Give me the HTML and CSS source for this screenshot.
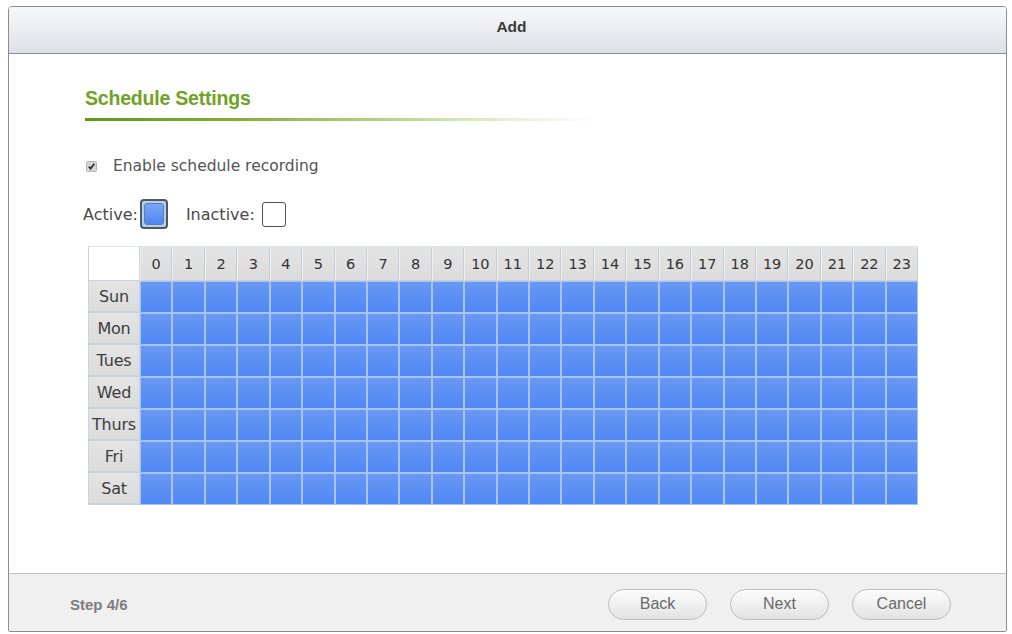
FILE: index.html
```html
<!DOCTYPE html>
<html>
<head>
<meta charset="utf-8">
<title>Add</title>
<link rel="stylesheet" href="styles.css">
</head>
<body>
<div class="dialog">
  <div class="titlebar">Add</div>
  <div class="content">
    <h2 class="section-title">Schedule Settings</h2>
    <div class="section-rule"></div>
    <label class="check-row">
      <svg class="check" width="11" height="11" viewBox="0 0 11 11"><rect x="0.5" y="0.5" width="10" height="10" rx="1" fill="#d6d6d6" stroke="#b5b5b5"/><path d="M2.8 5.6 L4.6 7.6 L8.3 2.8" fill="none" stroke="#333" stroke-width="1.8"/></svg>
      <span>Enable schedule recording</span>
    </label>
    <div class="legend">
      <span class="legend-label">Active:</span>
      <span class="swatch-active"><span class="swatch-fill"></span></span>
      <span class="legend-label inactive-label">Inactive:</span>
      <span class="swatch-inactive"></span>
    </div>
    <div class="schedule">
      <div class="corner"></div>
      <div class="hd">0</div><div class="hd">1</div><div class="hd">2</div><div class="hd">3</div><div class="hd">4</div><div class="hd">5</div><div class="hd">6</div><div class="hd">7</div><div class="hd">8</div><div class="hd">9</div><div class="hd">10</div><div class="hd">11</div><div class="hd">12</div><div class="hd">13</div><div class="hd">14</div><div class="hd">15</div><div class="hd">16</div><div class="hd">17</div><div class="hd">18</div><div class="hd">19</div><div class="hd">20</div><div class="hd">21</div><div class="hd">22</div><div class="hd">23</div>

      <div class="day">Sun</div>
      <span class="c"></span><span class="c"></span><span class="c"></span><span class="c"></span><span class="c"></span><span class="c"></span><span class="c"></span><span class="c"></span><span class="c"></span><span class="c"></span><span class="c"></span><span class="c"></span><span class="c"></span><span class="c"></span><span class="c"></span><span class="c"></span><span class="c"></span><span class="c"></span><span class="c"></span><span class="c"></span><span class="c"></span><span class="c"></span><span class="c"></span><span class="c"></span>

      <div class="day">Mon</div>
      <span class="c"></span><span class="c"></span><span class="c"></span><span class="c"></span><span class="c"></span><span class="c"></span><span class="c"></span><span class="c"></span><span class="c"></span><span class="c"></span><span class="c"></span><span class="c"></span><span class="c"></span><span class="c"></span><span class="c"></span><span class="c"></span><span class="c"></span><span class="c"></span><span class="c"></span><span class="c"></span><span class="c"></span><span class="c"></span><span class="c"></span><span class="c"></span>

      <div class="day">Tues</div>
      <span class="c"></span><span class="c"></span><span class="c"></span><span class="c"></span><span class="c"></span><span class="c"></span><span class="c"></span><span class="c"></span><span class="c"></span><span class="c"></span><span class="c"></span><span class="c"></span><span class="c"></span><span class="c"></span><span class="c"></span><span class="c"></span><span class="c"></span><span class="c"></span><span class="c"></span><span class="c"></span><span class="c"></span><span class="c"></span><span class="c"></span><span class="c"></span>

      <div class="day">Wed</div>
      <span class="c"></span><span class="c"></span><span class="c"></span><span class="c"></span><span class="c"></span><span class="c"></span><span class="c"></span><span class="c"></span><span class="c"></span><span class="c"></span><span class="c"></span><span class="c"></span><span class="c"></span><span class="c"></span><span class="c"></span><span class="c"></span><span class="c"></span><span class="c"></span><span class="c"></span><span class="c"></span><span class="c"></span><span class="c"></span><span class="c"></span><span class="c"></span>

      <div class="day">Thurs</div>
      <span class="c"></span><span class="c"></span><span class="c"></span><span class="c"></span><span class="c"></span><span class="c"></span><span class="c"></span><span class="c"></span><span class="c"></span><span class="c"></span><span class="c"></span><span class="c"></span><span class="c"></span><span class="c"></span><span class="c"></span><span class="c"></span><span class="c"></span><span class="c"></span><span class="c"></span><span class="c"></span><span class="c"></span><span class="c"></span><span class="c"></span><span class="c"></span>

      <div class="day">Fri</div>
      <span class="c"></span><span class="c"></span><span class="c"></span><span class="c"></span><span class="c"></span><span class="c"></span><span class="c"></span><span class="c"></span><span class="c"></span><span class="c"></span><span class="c"></span><span class="c"></span><span class="c"></span><span class="c"></span><span class="c"></span><span class="c"></span><span class="c"></span><span class="c"></span><span class="c"></span><span class="c"></span><span class="c"></span><span class="c"></span><span class="c"></span><span class="c"></span>

      <div class="day">Sat</div>
      <span class="c"></span><span class="c"></span><span class="c"></span><span class="c"></span><span class="c"></span><span class="c"></span><span class="c"></span><span class="c"></span><span class="c"></span><span class="c"></span><span class="c"></span><span class="c"></span><span class="c"></span><span class="c"></span><span class="c"></span><span class="c"></span><span class="c"></span><span class="c"></span><span class="c"></span><span class="c"></span><span class="c"></span><span class="c"></span><span class="c"></span><span class="c"></span>
    </div>
  </div>
  <div class="footer">
    <span class="step">Step 4/6</span>
    <div class="buttons">
      <button class="btn">Back</button>
      <button class="btn">Next</button>
      <button class="btn">Cancel</button>
    </div>
  </div>
</div>
</body>
</html>
```

FILE: styles.css
```css
html, body {
  margin: 0;
  padding: 0;
  background: #ffffff;
}

body {
  width: 1012px;
  height: 634px;
  overflow: hidden;
  font-family: "DejaVu Sans", Verdana, sans-serif;
}

.dialog {
  margin: 6px 0 0 8px;
  width: 999px;
  height: 626px;
  box-sizing: border-box;
  border: 1px solid #8d8d8d;
  border-radius: 4px 4px 2px 2px;
  display: flex;
  flex-direction: column;
  overflow: hidden;
  background: #ffffff;
}

.titlebar {
  height: 47px;
  flex: none;
  box-sizing: border-box;
  border-bottom: 1px solid #8e8e8e;
  background: linear-gradient(#f7f8fa 0%, #eceef1 45%, #dde0e4 100%);
  display: flex;
  align-items: center;
  justify-content: center;
  font-family: "Liberation Sans", Arial, sans-serif;
  font-weight: bold;
  font-size: 15.5px;
  color: #3a3a3a;
  padding: 0 0 7px 8px;
}

.content {
  flex: 1;
  padding: 33px 0 0 76px;
}

.section-title {
  margin: 0;
  font-family: "Liberation Sans", Arial, sans-serif;
  font-weight: bold;
  font-size: 19.5px;
  line-height: 22px;
  color: #6ea323;
  letter-spacing: -0.2px;
}

.section-rule {
  margin-top: 9px;
  width: 512px;
  height: 3px;
  background: linear-gradient(to right, #5d9a17 0%, #7fb238 30%, #b8d68a 60%, rgba(220, 236, 190, 0.6) 85%, rgba(255, 255, 255, 0) 100%);
}

.check-row {
  margin-top: 35px;
  margin-left: 1px;
  height: 20px;
  display: flex;
  align-items: center;
  gap: 16px;
  font-size: 15.5px;
  color: #555555;
}

.check {
  display: block;
  flex: none;
}

.legend {
  margin-top: 23px;
  margin-left: -2px;
  height: 30px;
  display: flex;
  align-items: center;
  font-size: 16px;
  color: #4a4a4a;
}

.swatch-active {
  margin-left: 2px;
  width: 28px;
  height: 30px;
  box-sizing: border-box;
  border: 2px solid #4d5a66;
  border-radius: 4px;
  padding: 2px;
  background: #b8cde6;
  display: flex;
}

.swatch-fill {
  flex: 1;
  border-radius: 3px;
  background: linear-gradient(#7aa6f6, #4f86f3);
  border: 1px solid #5a7fb8;
}

.inactive-label {
  margin-left: 18px;
}

.swatch-inactive {
  margin-left: 7px;
  width: 24px;
  height: 25px;
  box-sizing: border-box;
  border: 1px solid #4f4f4f;
  border-radius: 3px;
  background: #ffffff;
}

.schedule {
  margin-top: 17px;
  margin-left: 3px;
  width: 830px;
  height: 259px;
  display: grid;
  grid-template-columns: 51px repeat(24, 1fr);
  grid-template-rows: 34px repeat(7, 1fr);
  box-sizing: border-box;
  border-left: 1px solid #cbd3dc;
  border-top: 1px solid #dfe4ea;
}

.corner {
  background: #ffffff;
  border-right: 1px solid #cbd3dc;
  border-bottom: 1px solid #cbd3dc;
}

.hd {
  background: linear-gradient(#e4e4e4, #dcdcdc);
  border-right: 1px solid #c6cfda;
  border-left: 1px solid #eeeeee;
  border-bottom: 1px solid #c6cfda;
  display: flex;
  align-items: center;
  justify-content: center;
  font-size: 14.5px;
  color: #333333;
}

.day {
  background: linear-gradient(#e4e4e4, #dcdcdc);
  border-right: 1px solid #c6cfda;
  border-bottom: 2px solid #c9d2dc;
  display: flex;
  align-items: center;
  justify-content: center;
  font-size: 16px;
  color: #3d3d3d;
  letter-spacing: -0.2px;
}

.c {
  display: block;
  background: linear-gradient(#6a99f3 0%, #5a8ef4 55%, #5088f5 100%);
  border: 1px solid #a6c4f4;
}

.footer {
  height: 57px;
  flex: none;
  border-top: 1px solid #c2c2c2;
  background: #f0f0f0;
  display: flex;
  align-items: center;
  justify-content: space-between;
  padding: 0 55px 0 61px;
}

.step {
  font-family: "Liberation Sans", Arial, sans-serif;
  font-weight: bold;
  font-size: 15px;
  color: #7d7d7d;
  margin-top: 3px;
}

.buttons {
  display: flex;
  gap: 23px;
  margin-top: 3px;
}

.btn {
  width: 99px;
  height: 31px;
  border: 1px solid #bdbdbd;
  border-radius: 16px;
  background: linear-gradient(#fbfbfb 0%, #f0f0f0 50%, #e2e2e2 100%);
  box-shadow: inset 0 1px 0 #ffffff;
  font-family: "Liberation Sans", Arial, sans-serif;
  font-size: 16px;
  color: #6a6a6a;
  padding: 0;
}
```
